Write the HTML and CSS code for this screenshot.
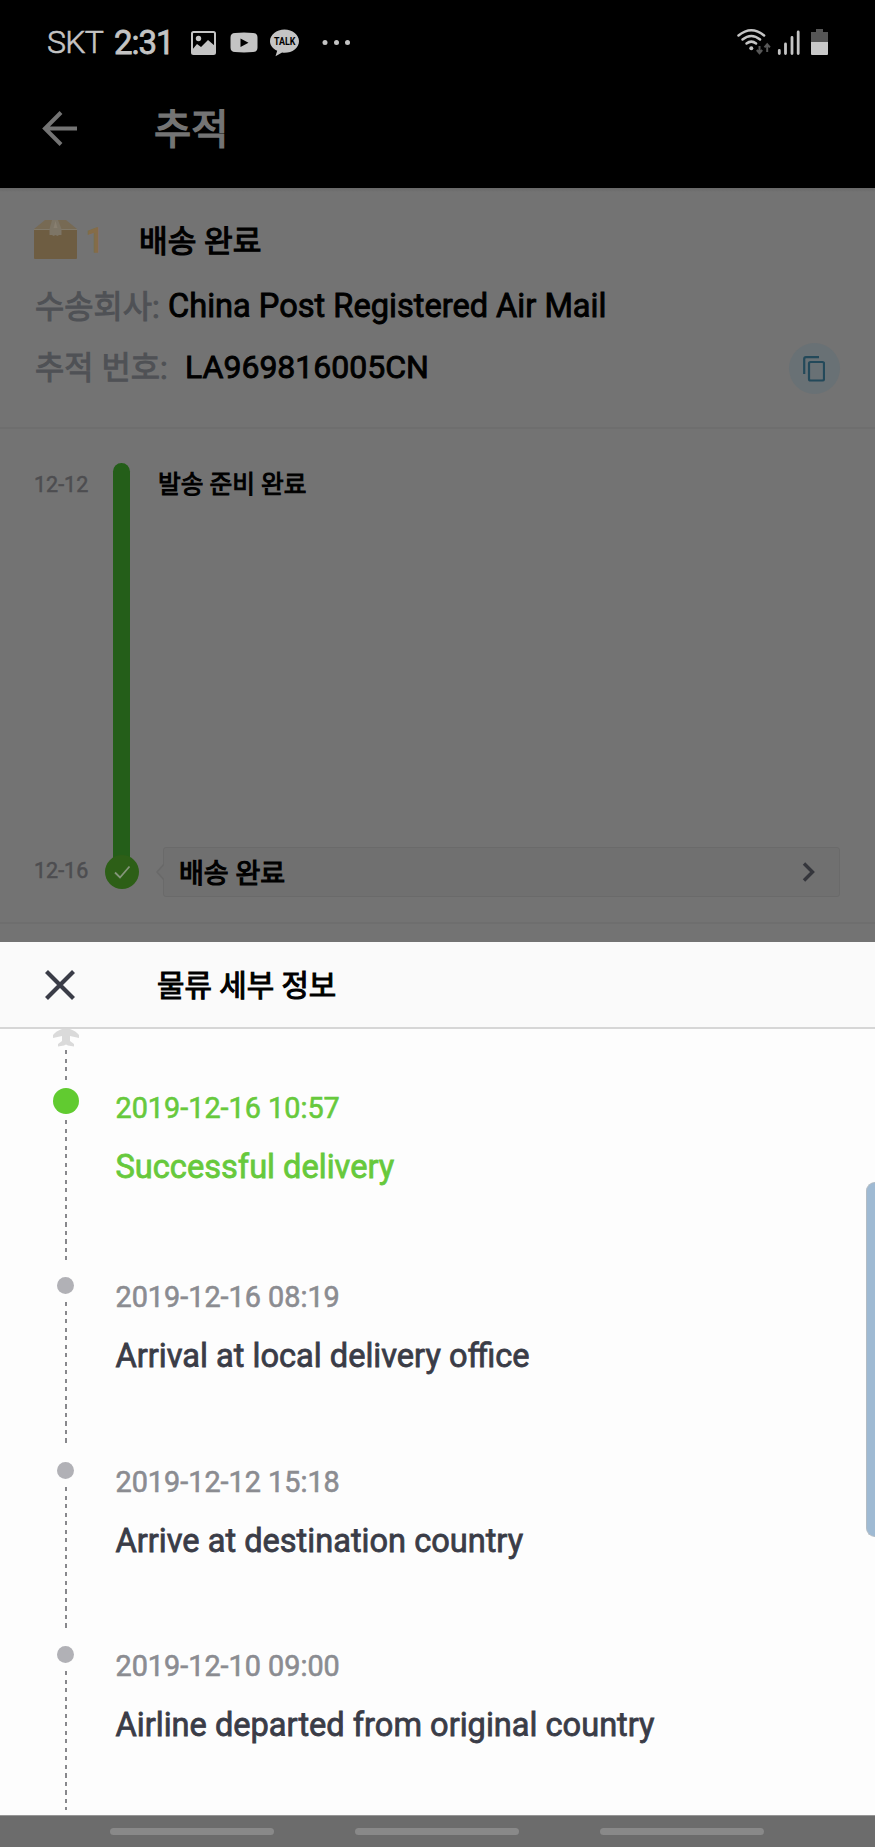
FILE: index.html
```html
<!DOCTYPE html>
<html lang="ko">
<head>
<meta charset="utf-8">
<title>추적</title>
<link rel="stylesheet" href="styles.css">
</head>
<body>
<div class="screen">
  <header class="top">
    <div class="status">
      <span class="carrier">SKT</span>
      <span class="clock">2:31</span>
      <svg class="status-left" width="170" height="34" viewBox="185 24 170 34">
        <rect x="192" y="31" width="23" height="22" rx="1.5" fill="none" stroke="#c4c4c4" stroke-width="2"/>
        <circle cx="198.500" cy="37.500" r="2.700" fill="#c4c4c4"/>
        <path d="M192 49l5-6 4 3 7-7 7 6v8h-23z" fill="#c4c4c4"/>
        <path fill-rule="evenodd" d="M235 32q9-.8 18 0 4.500.2 4.500 4.500v10q0 4.300-4.500 4.500-9 .8-18 0-4.500-.2-4.500-4.500v-10q0-4.300 4.500-4.500zM240.500 37.500v8.500l8-4.250z" fill="#c4c4c4"/>
        <path d="M284.500 28.500c8 0 14.500 5.200 14.500 11.700s-6.500 11.600-14.500 11.600c-.8 0-1.600 0-2.400-.2l-6.600 3.600 1.700-5.500c-4.300-2-7.200-5.500-7.200-9.500 0-6.500 6.500-11.700 14.500-11.700z" fill="#c4c4c4"/>
        <text class="talk" x="274" y="44.200" textLength="21.500" lengthAdjust="spacingAndGlyphs">TALK</text>
        <g fill="#c4c4c4"><circle cx="325" cy="41.500" r="2.500"/><circle cx="336.500" cy="41.500" r="2.500"/><circle cx="347.500" cy="41.500" r="2.500"/></g>
      </svg>
      <svg class="status-right" width="100" height="34" viewBox="732 24 100 34">
        <g fill="none" stroke="#c4c4c4" stroke-width="2.500" stroke-linecap="round">
          <path d="M738.500 34.500q12.800-10.500 25.600 0"/>
          <path d="M742.500 38.500q8.800-7 17.600 0"/>
          <path d="M746.500 42.500q4.800-3.800 9.600 0"/>
        </g>
        <circle cx="751.300" cy="47.300" r="2" fill="#c4c4c4"/>
        <path d="M759.500 45v7m-2.700-3 2.700 3.200 2.700-3.200M767.200 51v-8m-2.700 3.400 2.700-3.200 2.700 3.200" fill="none" stroke="#575757" stroke-width="2"/>
        <path d="M779.300 49.500v3M785.500 43v9.500M792 36.500v16M798.200 31v21.500" stroke="#c4c4c4" stroke-width="2.800" stroke-linecap="round"/>
        <path d="M816 28h7v3h5v10h-17V31h5z" fill="#555"/>
        <path d="M811 41h17v12q0 1-1 1h-15q-1 0-1-1z" fill="#c8c8c8"/>
      </svg>
    </div>
    <div class="appbar">
      <svg width="36" height="36" viewBox="42 110 36 36"><path d="M61 112.500 45 128.500 61 144.500M45 128.500H77" fill="none" stroke="#747474" stroke-width="4"/></svg>
      <h1 class="app-title">추적</h1>
    </div>
  </header>

  <section class="summary">
    <div class="state-row">
      <svg class="box" width="43" height="39" viewBox="0 0 43 39">
        <path d="M0 9 11 0h21l11 9z" fill="#776a54"/>
        <path d="M0 10h43v28q0 1-1 1H1q-1 0-1-1z" fill="#6e5d42"/>
        <path d="M0 9.500h43" stroke="#817969"/>
        <path d="M18 0h6l3.500 9v6h-2.500l-1.500 1-2-1-2 1-1.500-1H15.500V9z" fill="#7d7566"/>
        <path d="M21.500 1 19.500 8h4z" fill="#887f70"/>
      </svg>
      <span class="count">1</span>
      <strong class="state">배송 완료</strong>
    </div>
    <div class="info-row"><span class="label">수송회사:</span><span class="value carrier-name">China Post Registered Air Mail</span></div>
    <div class="info-row second">
      <span class="label">추적 번호:</span><span class="value number">LA969816005CN</span>
      <span class="copy"><svg width="22" height="26" viewBox="0 0 22 26"><path d="M1.200 18V3q0-1.800 1.800-1.800h13" fill="none" stroke="#23495a" stroke-width="2.200"/><rect x="6" y="6" width="15" height="18.500" rx="1.500" fill="none" stroke="#23495a" stroke-width="2.200"/></svg></span>
    </div>
  </section>

  <section class="progress">
    <div class="dates"><span>12-12</span><span>12-16</span></div>
    <div class="track"><div class="bar"></div><span class="check"><svg width="34" height="34" viewBox="0 0 34 34"><path d="M10 17.500 15 22.500 24.500 11.500" fill="none" stroke="#85967b" stroke-width="1.800"/></svg></span></div>
    <div class="stages">
      <div class="ready">발송 준비 완료</div>
      <div class="stage-card">
        <svg class="notch" width="8" height="16" viewBox="0 0 8 16"><path d="M8 0 1 8l7 8" fill="#707070" stroke="#696969" stroke-width="1.500"/></svg>
        <span>배송 완료</span>
        <svg width="14" height="20" viewBox="0 0 14 20"><path d="M2 1.500 10.500 10 2 18.500" fill="none" stroke="#35363c" stroke-width="3.400"/></svg>
      </div>
    </div>
  </section>
  <div class="backdrop-gap"></div>

  <section class="sheet">
    <div class="sheet-head">
      <svg width="30" height="30" viewBox="0 0 30 30"><path d="M1.500 1.500 28.500 28.500M28.500 1.500 1.500 28.500" stroke="#3a3c47" stroke-width="4.200"/></svg>
      <h2 class="sheet-title">물류 세부 정보</h2>
    </div>
    <div class="origin">
      <svg width="26" height="18" viewBox="0 0 26 18"><path d="M9 0h8q6 2 9 6v3l-9-2v5l4 3v2.500l-6-1-2-1-2 1-6 1V15l4-3V7l-9 2V6q3-4 9-6z" fill="#dadada"/></svg>
      <div class="dash"></div>
    </div>
    <ol class="events">
      <li class="event current">
        <div class="rail"><i class="dot"></i><div class="dash"></div></div>
        <div><div class="when">2019-12-16 10:57</div><div class="what">Successful delivery</div></div>
      </li>
      <li class="event">
        <div class="rail"><i class="dot"></i><div class="dash"></div></div>
        <div><div class="when">2019-12-16 08:19</div><div class="what">Arrival at local delivery office</div></div>
      </li>
      <li class="event">
        <div class="rail"><i class="dot"></i><div class="dash"></div></div>
        <div><div class="when">2019-12-12 15:18</div><div class="what">Arrive at destination country</div></div>
      </li>
      <li class="event last">
        <div class="rail"><i class="dot"></i><div class="dash"></div></div>
        <div><div class="when">2019-12-10 09:00</div><div class="what">Airline departed from original country</div></div>
      </li>
    </ol>
    <div class="edge-handle"></div>
  </section>

  <nav class="nav"><i></i><i></i><i></i></nav>
</div>
</body>
</html>
```
FILE: styles.css
```css
* { box-sizing: border-box; }
body { margin: 0; background: #000; font-family: Roboto, "Noto Sans CJK KR", sans-serif; }
h1, h2, ol { margin: 0; padding: 0; font-weight: 400; list-style: none; }
svg { display: block; flex: none; }
.screen { width: 875px; height: 1847px; display: flex; flex-direction: column; overflow: hidden; }

.top { height: 188px; background: #000; flex: none; }
.status { height: 84px; display: flex; align-items: center; padding-left: 47px; color: #c4c4c4; white-space: nowrap; }
.carrier { font-size: 32px; width: 67px; font-weight: 300; letter-spacing: -0.7px; -webkit-text-stroke: 0.6px #c4c4c4; }
.clock { font-size: 33px; width: 71px; letter-spacing: -1px; -webkit-text-stroke: 0.8px #c4c4c4; }
.status-left { flex: none; }
.status-right { margin-left: auto; margin-right: 43px; }
.talk { font: 700 11px Roboto, sans-serif; fill: #000; }
.appbar { height: 104px; display: flex; align-items: center; padding: 0 0 16px 42px; }
.app-title { font-size: 40.500px; line-height: 50px; padding-top: 3px; color: #747474; margin-left: 76px; -webkit-text-stroke: 1.500px #747474; }

.summary { height: 241px; flex: none; background: linear-gradient(#686868, #737373 4px); border-bottom: 2px solid #6e6e6e; padding: 28px 34px 0; }
.state-row { height: 46px; display: flex; align-items: center; }
.count { font-size: 33px; line-height: 46px; color: #856c48; width: 52px; padding: 3px 0 0 9px; -webkit-text-stroke: 1.300px #856c48; }
.state { font-size: 31.200px; line-height: 46px; padding-top: 5px; font-weight: 400; -webkit-text-stroke: 1.200px #000; margin-left: 10px; }
.info-row { height: 61px; margin-top: 13px; display: flex; align-items: center; font-size: 32px; line-height: 40px; white-space: nowrap; }
.info-row.second { margin-top: 0; }
.label { font-size: 31.800px; color: #4f5155; width: 134px; padding: 2px 0 0 1px; -webkit-text-stroke: 1px #4f5155; }
.second .label { width: 151px; }
.value { -webkit-text-stroke: 0.900px #000; }
.carrier-name { font-size: 32.600px; }
.copy { width: 51px; height: 51px; border-radius: 50%; background: #697175; margin: 4px 1px 0 auto; display: flex; align-items: center; justify-content: center; }
.copy svg { margin-right: 2px; }

.progress { height: 495px; flex: none; background: #737373; border-bottom: 2px solid #6e6e6e; padding: 34px 34px 0; display: flex; }
.dates { width: 70px; height: 425px; display: flex; flex-direction: column; justify-content: space-between; padding: 8px 0 3px; color: #4d4d50; font-size: 21.500px; line-height: 28px; -webkit-text-stroke: 0.500px #4d4d50; }
.track { width: 36px; display: flex; flex-direction: column; align-items: center; }
.bar { width: 17px; height: 396px; margin-right: 1px; border-radius: 9px 9px 0 0; background: #245e19; }
.check { width: 34px; height: 34px; border-radius: 50%; background: #2d5f17; margin-top: -4px; }
.stages { flex: 1; padding-left: 18px; display: flex; flex-direction: column; }
.ready { font-size: 24.700px; line-height: 42px; padding-top: 1px; height: 384px; -webkit-text-stroke: 1px #000; }
.stage-card { position: relative; width: 677px; height: 50px; margin-left: 5px; border: 1.500px solid #6a6a6a; border-radius: 3px; background: #707070; display: flex; align-items: center; justify-content: space-between; padding: 0 23px 0 15px; font-size: 27px; line-height: 48px; -webkit-text-stroke: 1.200px #000; }
.stage-card span { padding-top: 3px; }
.notch { position: absolute; left: -8px; top: 16px; }
.backdrop-gap { height: 18px; flex: none; background: #737373; }

.sheet { position: relative; height: 873px; flex: none; background: #fdfdfd; }
.sheet-head { height: 87px; background: #fafafa; border-bottom: 2px solid #d6d6d6; display: flex; align-items: center; padding-left: 45px; }
.sheet-title { font-size: 29.800px; line-height: 44px; padding-top: 2px; margin-left: 82px; -webkit-text-stroke: 1.100px #000; }
.origin { width: 26px; height: 59px; margin-left: 52.500px; display: flex; flex-direction: column; align-items: center; gap: 3px; }
.dash { width: 2px; background: repeating-linear-gradient(#88888c 0 4.200px, transparent 4.200px 8.530px); }
.origin .dash { height: 34px; }
.events { display: flex; flex-direction: column; }
.event { height: 184.700px; display: flex; padding-left: 52.500px; white-space: nowrap; }
.rail { width: 63px; padding-right: 37px; display: flex; flex-direction: column; align-items: center; gap: 8px; }
.dot { width: 17px; height: 17px; border-radius: 50%; background: #b1b1b6; flex: none; }
.rail .dash { height: 141px; }
.when { font-size: 28.800px; line-height: 40px; color: #8b8c91; -webkit-text-stroke: 0.600px currentColor; }
.what { font-size: 32.600px; line-height: 40px; margin-top: 19px; color: #3a3c47; -webkit-text-stroke: 0.800px currentColor; }
.current { height: 189px; }
.current .rail { gap: 6px; }
.current .rail .dash { height: 140px; }
.current .dot { width: 26px; height: 26px; background: #61cb30; }
.current .when, .current .what { color: #67c93c; }
.last { height: 164px; }
.last .rail .dash { height: 144px; }
.edge-handle { position: absolute; right: 0; top: 240px; width: 9px; height: 355px; background: #9fbad3; border: 1.500px solid #b3bcc4; border-right: 0; border-radius: 9px 0 0 9px; }

.nav { height: 32px; flex: none; background: #6c6c6c; border-top: 1px solid #969696; display: flex; gap: 81px; padding: 12px 0 0 110px; }
.nav i { width: 164px; height: 7px; border-radius: 4px; background: #898989; }
```
